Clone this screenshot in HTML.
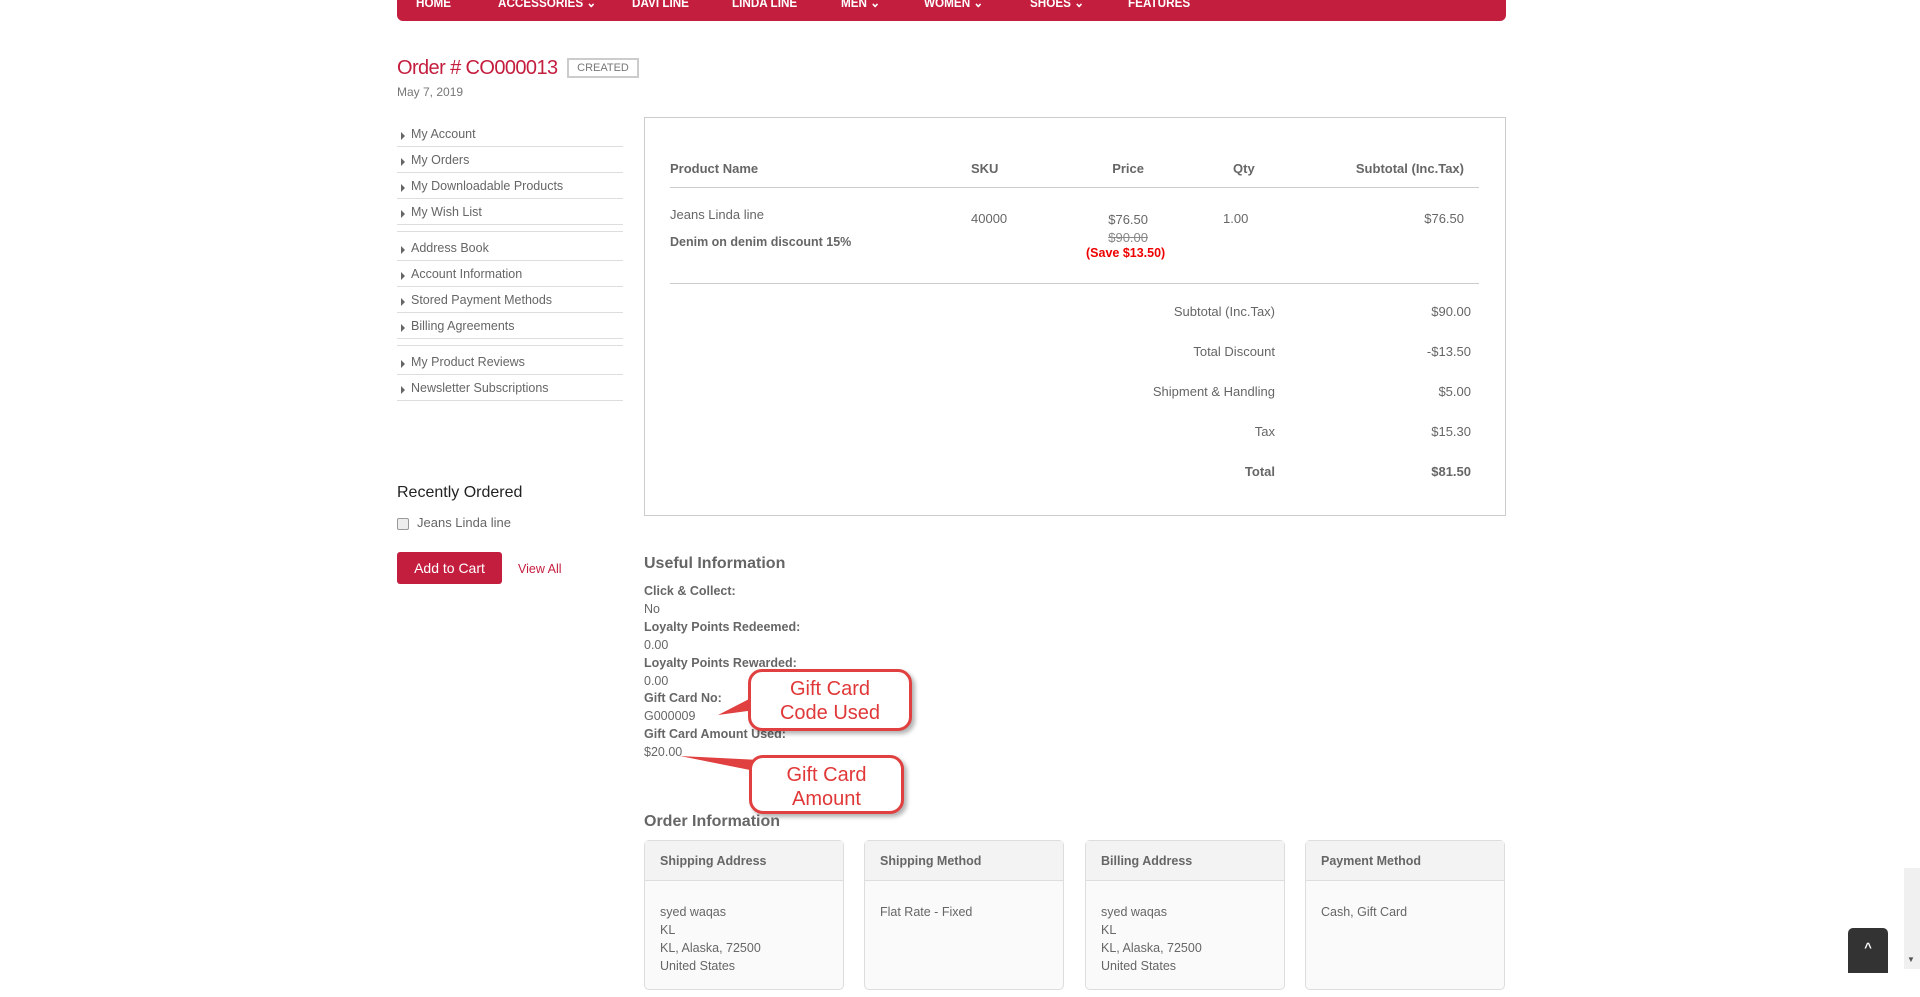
<!DOCTYPE html>
<html><head><meta charset="utf-8"><style>
*{margin:0;padding:0;box-sizing:border-box}
body{width:1920px;height:969px;overflow:hidden;background:#fff;font-family:"Liberation Sans",sans-serif;color:#666;font-size:13px;position:relative}
.a{position:absolute;white-space:nowrap}
.nav{left:397px;top:-10px;width:1109px;height:31px;background:#c41e3f;border-radius:0 0 6px 6px}
.nav span{position:absolute;top:5px;color:#fff;font-weight:bold;font-size:13px;transform:scaleX(.9);transform-origin:left}
.side{left:397px;width:226px;border-bottom:1px solid #ddd;height:20px;font-size:12.5px;color:#666;padding-left:14px}
.side:before{content:"";position:absolute;left:4px;top:5px;border-left:4px solid #666;border-top:4px solid transparent;border-bottom:4px solid transparent}
.box{left:644px;top:117px;width:862px;height:399px;border:1px solid #ccc}
.th{font-weight:bold;color:#666;font-size:13px}
.r{text-align:right}
.card{width:200px;height:150px;border:1px solid #ddd;border-radius:5px;background:#fafafa}
.card .h{height:40px;background:#f3f3f3;border-bottom:1px solid #ddd;padding:13px 15px;font-weight:bold;font-size:12.5px;color:#666}
.card .b{padding:22px 15px;line-height:18px;font-size:12.5px}
.call{border:3px solid #e04040;border-radius:14px;background:#fff;color:#e03838;font-size:20px;text-align:center;line-height:24px;box-shadow:3px 3px 4px rgba(0,0,0,.3)}
</style></head><body>
<div class="a nav">
<span style="left:19px">HOME</span><span style="left:101px">ACCESSORIES ⌄</span><span style="left:235px">DAVI LINE</span><span style="left:335px">LINDA LINE</span><span style="left:444px">MEN ⌄</span><span style="left:527px">WOMEN ⌄</span><span style="left:633px">SHOES ⌄</span><span style="left:731px">FEATURES</span>
</div>
<div class="a" style="left:397px;top:57px;font-size:20px;letter-spacing:-0.6px;color:#c41e3f">Order # CO000013</div>
<div class="a" style="left:567px;top:58px;width:72px;height:20px;border:2px solid #ccc;font-size:11px;color:#777;text-align:center;line-height:16px">CREATED</div>
<div class="a" style="left:397px;top:85px;font-size:12px;color:#777">May 7, 2019</div>

<div class="a side" style="top:127px">My Account</div>
<div class="a side" style="top:153px">My Orders</div>
<div class="a side" style="top:179px">My Downloadable Products</div>
<div class="a side" style="top:205px">My Wish List</div>
<div class="a" style="left:397px;top:231px;width:226px;border-top:1px solid #ddd"></div>
<div class="a side" style="top:241px">Address Book</div>
<div class="a side" style="top:267px">Account Information</div>
<div class="a side" style="top:293px">Stored Payment Methods</div>
<div class="a side" style="top:319px">Billing Agreements</div>
<div class="a" style="left:397px;top:345px;width:226px;border-top:1px solid #ddd"></div>
<div class="a side" style="top:355px">My Product Reviews</div>
<div class="a side" style="top:381px">Newsletter Subscriptions</div>

<div class="a" style="left:397px;top:484px;font-size:16px;color:#222">Recently Ordered</div>
<div class="a" style="left:397px;top:518px;width:12px;height:12px;border:1px solid #999;border-radius:2px;background:#eee"></div>
<div class="a" style="left:417px;top:515px;font-size:13px">Jeans Linda line</div>
<div class="a" style="left:397px;top:552px;width:105px;height:32px;background:#c41e3f;border-radius:3px;color:#fff;font-size:14px;text-align:center;line-height:32px">Add to Cart</div>
<div class="a" style="left:518px;top:562px;color:#c41e3f;font-size:12.5px">View All</div>

<div class="a box"></div>
<div class="a th" style="left:670px;top:161px">Product Name</div>
<div class="a th" style="left:971px;top:161px">SKU</div>
<div class="a th r" style="left:1064px;width:80px;top:161px">Price</div>
<div class="a th" style="left:1233px;top:161px">Qty</div>
<div class="a th r" style="left:1264px;width:200px;top:161px">Subtotal (Inc.Tax)</div>
<div class="a" style="left:670px;top:187px;width:809px;border-top:1px solid #ccc"></div>
<div class="a" style="left:670px;top:207px">Jeans Linda line</div>
<div class="a th" style="left:670px;top:235px;font-size:12.5px">Denim on denim discount 15%</div>
<div class="a" style="left:971px;top:211px">40000</div>
<div class="a r" style="left:1064px;width:84px;top:211px;line-height:18px">$76.50<br><s style="color:#888">$90.00</s></div>
<div class="a" style="left:1086px;top:246px;color:#e00;font-weight:bold;font-size:12.5px">(Save $13.50)</div>
<div class="a" style="left:1223px;top:211px">1.00</div>
<div class="a r" style="left:1364px;width:100px;top:211px">$76.50</div>
<div class="a" style="left:670px;top:283px;width:809px;border-top:1px solid #ccc"></div>
<div class="a r" style="left:1075px;width:200px;top:292px;line-height:40px">Subtotal (Inc.Tax)<br>Total Discount<br>Shipment &amp; Handling<br>Tax<br><b>Total</b></div>
<div class="a r" style="left:1371px;width:100px;top:292px;line-height:40px">$90.00<br>-$13.50<br>$5.00<br>$15.30<br><b>$81.50</b></div>

<div class="a" style="left:644px;top:555px;font-size:16px;font-weight:bold;color:#666">Useful Information</div>
<div class="a" style="left:644px;top:583px;line-height:17.9px;font-size:12.5px">
<b>Click &amp; Collect:</b><br>No<br><b>Loyalty Points Redeemed:</b><br>0.00<br><b>Loyalty Points Rewarded:</b><br>0.00<br><b>Gift Card No:</b><br>G000009<br><b>Gift Card Amount Used:</b><br>$20.00</div>

<svg class="a" style="left:640px;top:660px" width="140" height="120"><polygon points="78,55 115,36 115,50" fill="#e04040"/><polygon points="40,96 120,112 120,100" fill="#e04040"/></svg>
<div class="a call" style="left:748px;top:669px;width:164px;height:62px;padding-top:5px">Gift Card<br>Code Used</div>
<div class="a call" style="left:749px;top:755px;width:155px;height:59px;padding-top:5px">Gift Card<br>Amount</div>

<div class="a" style="left:644px;top:813px;font-size:16px;font-weight:bold;color:#666">Order Information</div>
<div class="a card" style="left:644px;top:840px"><div class="h">Shipping Address</div><div class="b">syed waqas<br>KL<br>KL, Alaska, 72500<br>United States</div></div>
<div class="a card" style="left:864px;top:840px"><div class="h">Shipping Method</div><div class="b">Flat Rate - Fixed</div></div>
<div class="a card" style="left:1085px;top:840px"><div class="h">Billing Address</div><div class="b">syed waqas<br>KL<br>KL, Alaska, 72500<br>United States</div></div>
<div class="a card" style="left:1305px;top:840px"><div class="h">Payment Method</div><div class="b">Cash, Gift Card</div></div>

<div class="a" style="left:1848px;top:928px;width:40px;height:45px;background:#333;border-radius:5px 5px 0 0;color:#fff;text-align:center;font-weight:bold;line-height:40px">^</div>
<div class="a" style="left:1904px;top:868px;width:16px;height:101px;background:#f0f0f0"></div>
<div class="a" style="left:1907px;top:955px;font-size:8px;color:#555">▼</div>
</body></html>
